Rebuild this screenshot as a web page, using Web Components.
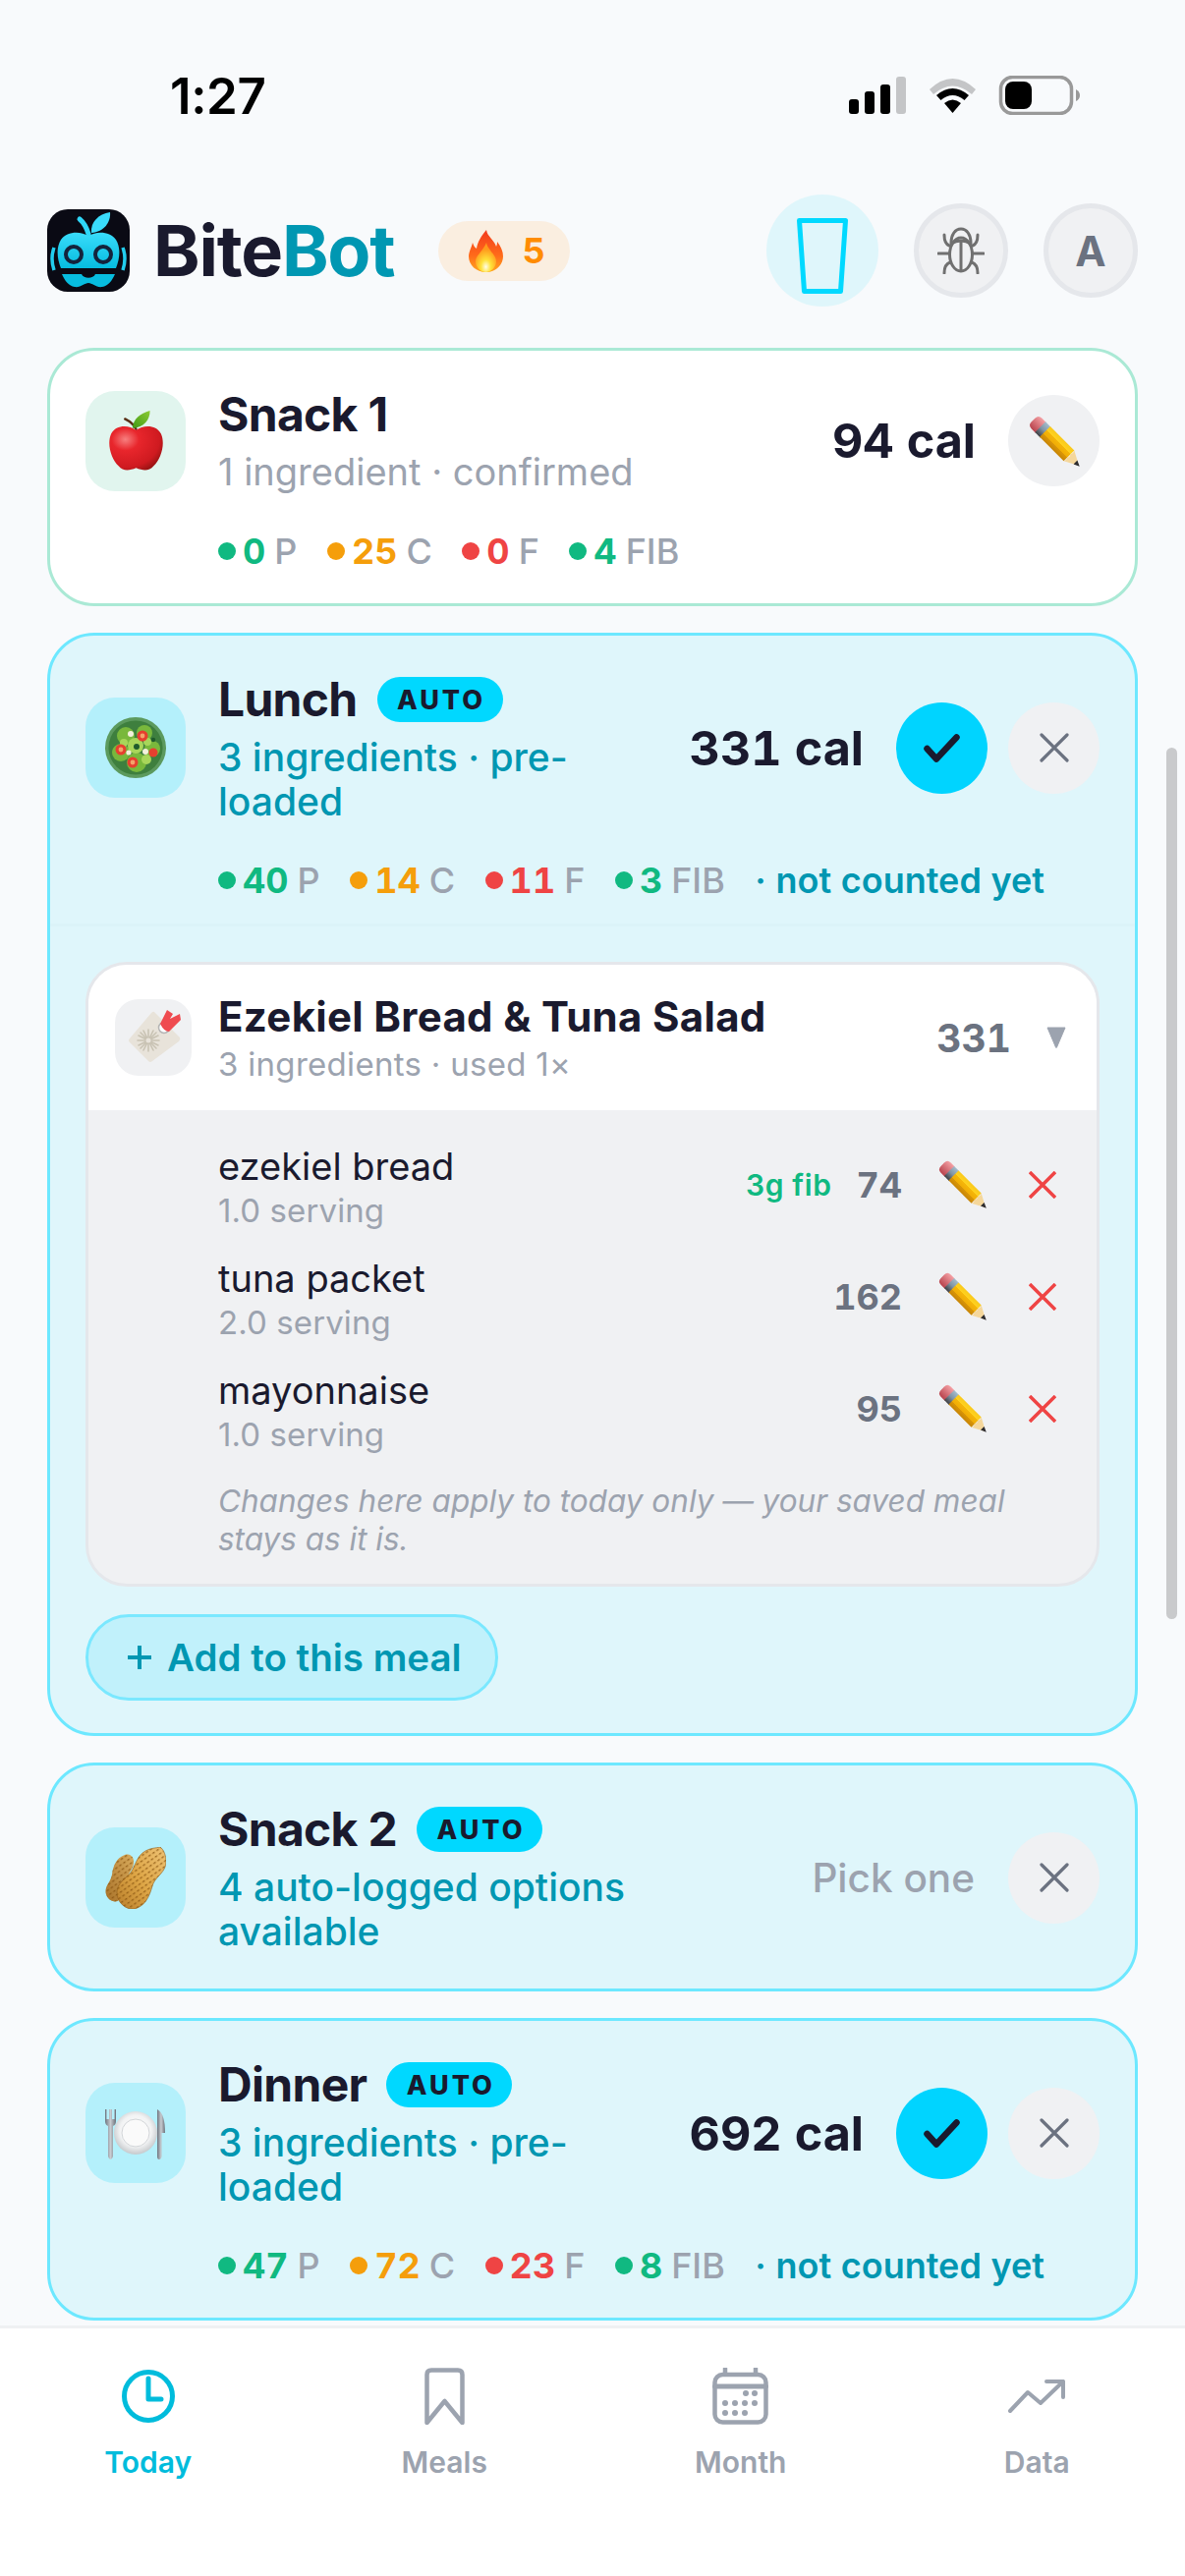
<!DOCTYPE html>
<html lang="en"><head><meta charset="utf-8"><title>BiteBot</title>
<style>
html,body{margin:0;padding:0;background:#f8fafc}
body{font-family:Inter,"Liberation Sans",sans-serif;color:#1a1a2e}
</style></head><body>
<bite-app>
  <status-bar slot="status"></status-bar>
  <app-header slot="header"></app-header>

  <meal-card tone="done">
    <food-icon slot="icon" name="apple" tone="done"></food-icon>
    <span slot="title">Snack 1</span>
    <span slot="sub">1 ingredient · confirmed</span>
    <cal-label slot="right">94 cal</cal-label>
    <round-btn slot="right" kind="edit"></round-btn>
    <macro-row slot="macros" p="0" c="25" f="0" fib="4"></macro-row>
  </meal-card>

  <meal-card tone="auto">
    <food-icon slot="icon" name="salad" tone="auto"></food-icon>
    <span slot="title">Lunch</span>
    <auto-badge slot="title-extra">AUTO</auto-badge>
    <span slot="sub">3 ingredients · pre-loaded</span>
    <cal-label slot="right">331 cal</cal-label>
    <round-btn slot="right" kind="check"></round-btn>
    <round-btn slot="right" kind="close"></round-btn>
    <macro-row slot="macros" p="40" c="14" f="11" fib="3" pending="· not counted yet"></macro-row>
    <card-rule></card-rule>
    <saved-meal title="Ezekiel Bread &amp; Tuna Salad" meta="3 ingredients · used 1×" cal="331">
      <ingredient-row name="ezekiel bread" serving="1.0 serving" cal="74" fib="3g fib"></ingredient-row>
      <ingredient-row name="tuna packet" serving="2.0 serving" cal="162"></ingredient-row>
      <ingredient-row name="mayonnaise" serving="1.0 serving" cal="95"></ingredient-row>
      <span slot="note">Changes here apply to today only — your saved meal stays as it is.</span>
    </saved-meal>
    <add-button>Add to this meal</add-button>
  </meal-card>

  <meal-card tone="auto" nomacros>
    <food-icon slot="icon" name="peanut" tone="auto"></food-icon>
    <span slot="title">Snack 2</span>
    <auto-badge slot="title-extra">AUTO</auto-badge>
    <span slot="sub">4 auto-logged options available</span>
    <pick-label slot="right">Pick one</pick-label>
    <round-btn slot="right" kind="close"></round-btn>
  </meal-card>

  <meal-card tone="auto">
    <food-icon slot="icon" name="plate" tone="auto"></food-icon>
    <span slot="title">Dinner</span>
    <auto-badge slot="title-extra">AUTO</auto-badge>
    <span slot="sub">3 ingredients · pre-loaded</span>
    <cal-label slot="right">692 cal</cal-label>
    <round-btn slot="right" kind="check"></round-btn>
    <round-btn slot="right" kind="close"></round-btn>
    <macro-row slot="macros" p="47" c="72" f="23" fib="8" pending="· not counted yet"></macro-row>
  </meal-card>

  <tab-bar slot="tabs"></tab-bar>
</bite-app>

<script>
const ART={
 pencil:`<svg viewBox="0 0 64 64" width="100%" height="100%"><defs>
   <linearGradient id="pb" x1="0" y1="0" x2="0" y2="1"><stop offset="0" stop-color="#f9c91c"/><stop offset=".33" stop-color="#ffd21f"/><stop offset=".34" stop-color="#f5b60a"/><stop offset=".66" stop-color="#f0ac05"/><stop offset=".67" stop-color="#d99608"/><stop offset="1" stop-color="#c78505"/></linearGradient>
   <linearGradient id="pf" x1="0" y1="0" x2="0" y2="1"><stop offset="0" stop-color="#a5bccb"/><stop offset=".5" stop-color="#8094a5"/><stop offset="1" stop-color="#3f3f42"/></linearGradient>
   <linearGradient id="pe" x1="0" y1="0" x2="0" y2="1"><stop offset="0" stop-color="#f4a0a4"/><stop offset="1" stop-color="#b9434d"/></linearGradient>
   </defs><g transform="translate(8,8) rotate(45)">
   <path d="M11 -9H4Q-2 -9 -2 -3V3Q-2 9 4 9H11Z" fill="url(#pe)"/>
   <rect x="10" y="-9" width="9" height="18" fill="url(#pf)"/>
   <rect x="18" y="-9" width="41" height="18" fill="url(#pb)"/>
   <path d="M59 -9L76 0L59 9Q61 6 59 3Q61 0 59 -3Q61 -6 59 -9Z" fill="#f5d79b"/>
   <path d="M70 -3.2L77 0L70 3.2Z" fill="#2c2c30"/></g></svg>`,
 apple:`<svg viewBox="0 0 60 66" width="57" height="62"><defs>
   <radialGradient id="a" cx=".3" cy=".3" r=".85"><stop offset="0" stop-color="#f77f7f"/><stop offset=".3" stop-color="#e8262c"/><stop offset=".75" stop-color="#cf1a20"/><stop offset="1" stop-color="#87110f"/></radialGradient>
   <linearGradient id="l" x1="0" y1="1" x2="1" y2="0"><stop offset="0" stop-color="#3f9a15"/><stop offset="1" stop-color="#8ccb35"/></linearGradient></defs>
   <path d="M30 20C27 14 22 11 18 9" stroke="#5a2f16" stroke-width="2.6" fill="none" stroke-linecap="round"/>
   <path d="M26 19C27 9 34 3 45 0C45 10 39 18 26 19Z" fill="url(#l)"/>
   <path d="M30 21C22 15 8 15 3 25C-2 36 3 52 11 60C16 66 23 65 30 62C37 65 44 66 49 60C57 52 62 36 57 25C52 15 38 15 30 21Z" fill="url(#a)"/></svg>`,
 salad:`<svg viewBox="0 0 64 64" width="64" height="64"><circle cx="32" cy="32" r="31" fill="#5c9a5e"/><circle cx="32" cy="32" r="27.500" fill="#3e7f3e"/>
   <g fill="#79b83c"><circle cx="22" cy="20" r="9"/><circle cx="41" cy="17" r="8"/><circle cx="49" cy="33" r="8"/><circle cx="17" cy="37" r="9"/><circle cx="33" cy="47" r="10"/></g>
   <g fill="#a8d65a"><circle cx="32" cy="30" r="8"/><circle cx="20" cy="27" r="4"/><circle cx="44" cy="26" r="4"/><circle cx="43" cy="44" r="5"/></g>
   <g fill="#e6402f"><circle cx="17" cy="34" r="5.500"/><circle cx="39" cy="20" r="5.500"/><circle cx="29" cy="47" r="5.500"/><circle cx="50" cy="37" r="4.500"/></g>
   <g fill="#f5a36a"><circle cx="17" cy="34" r="2.400"/><circle cx="39" cy="20" r="2.400"/><circle cx="29" cy="47" r="2.400"/></g>
   <g fill="#f4f1dc"><circle cx="27" cy="18" r="3"/><circle cx="42" cy="36" r="3"/><circle cx="25" cy="37" r="2.600"/></g>
   <g fill="#1f5c2c"><circle cx="33" cy="31" r="3"/><circle cx="50" cy="24" r="2.200"/></g></svg>`,
 peanut:`<svg viewBox="0 0 62 63" width="62" height="63"><defs>
   <linearGradient id="n" x1="1" y1="0" x2="0" y2="1"><stop offset="0" stop-color="#eec274"/><stop offset=".55" stop-color="#dda545"/><stop offset="1" stop-color="#b97f2c"/></linearGradient>
   <linearGradient id="n2" x1="1" y1="0" x2="0" y2="1"><stop offset="0" stop-color="#d9ab5c"/><stop offset="1" stop-color="#a9732a"/></linearGradient>
   <pattern id="d" width="5" height="4.500" patternUnits="userSpaceOnUse" patternTransform="rotate(-35)"><rect x=".5" y="1" width="3" height="1.300" rx=".6" fill="#87530f" opacity=".75"/></pattern></defs>
   <path d="M20 8C26 6 30 11 29 17C28 23 24 26 22 32C20 40 20 47 13 55C7 57 1 52 0.500 46C0 39 6 35 7 28C8 20 11 11 20 8Z" fill="url(#n2)"/>
   <path d="M20 8C26 6 30 11 29 17C28 23 24 26 22 32C20 40 20 47 13 55C7 57 1 52 0.500 46C0 39 6 35 7 28C8 20 11 11 20 8Z" fill="url(#d)"/>
   <path d="M56 0C60 3 62 9 62 15C62 25 53 29 49 37C46 45 44 59 30 63C20 64 12 56 12 46C12 37 20 33 26 26C31 19 32 9 41 4C46 1 52 1 56 0Z" fill="url(#n)" stroke="#8f5a17" stroke-width=".6"/>
   <path d="M56 0C60 3 62 9 62 15C62 25 53 29 49 37C46 45 44 59 30 63C20 64 12 56 12 46C12 37 20 33 26 26C31 19 32 9 41 4C46 1 52 1 56 0Z" fill="url(#d)"/></svg>`,
 plate:`<svg viewBox="0 0 64 64" width="64" height="64"><defs><radialGradient id="p" cx=".5" cy=".45" r=".6"><stop offset="0" stop-color="#fff"/><stop offset=".6" stop-color="#f2f3f4"/><stop offset="1" stop-color="#b9bdc1"/></radialGradient>
   <linearGradient id="m" x1="0" y1="0" x2="1" y2="0"><stop offset="0" stop-color="#6f7680"/><stop offset=".5" stop-color="#c8ccd1"/><stop offset="1" stop-color="#6b7079"/></linearGradient></defs>
   <circle cx="32" cy="32" r="22" fill="url(#p)"/><circle cx="32" cy="32" r="14" fill="#fafafa" stroke="#d3d6d9" stroke-width="1"/>
   <path d="M1 8V20Q1 24 4 25V56Q5 59 6.500 59Q8 59 9 56V25Q12 24 12 20V8H10.500V18H8V8H5V18H2.500V8Z" fill="url(#m)"/>
   <path d="M54 8C60 11 62 20 62 32H58.500V56Q58 59 56 59Q54 59 54 56Z" fill="url(#m)"/></svg>`,
 tag:`<svg viewBox="0 0 78 78" width="78" height="78"><path d="M40 13L66 39Q67 41 65 43L38 63Q36 65 34 63L15 44Q13 42 15 40L37 14Q39 12 40 13Z" fill="#e8e3da"/>
   <g stroke="#c9c3b4" stroke-width="1.600" stroke-linecap="round"><path d="M34 31V53M23 42H45M26 34L42 50M42 34L26 50M29 32L39 52M39 32L29 52M24 37L44 47M44 37L24 47"/></g><circle cx="34" cy="42" r="2.500" fill="#e8e3da"/>
   <circle cx="50" cy="29" r="5.500" fill="#fff" stroke="#b5b5b5" stroke-width="1.500"/>
   <path d="M46 25L53 11L59 15L56 20L66 15L67 21L55 33Q50 33 46 25Z" fill="#ef4b50"/></svg>`
};
class Base extends HTMLElement{
  connectedCallback(){
    if(this.shadowRoot)return;
    const r=this.attachShadow({mode:'open'});
    r.innerHTML=`<style>${this.css()}</style>${this.html()}`;
  }
  a(n,d=''){return this.getAttribute(n)??d}
}
const def=(tag,css,html)=>customElements.define(tag,class extends Base{css(){return css}html(){return html?html(this):'<slot></slot>'}});

def('bite-app',`
 :host{display:block;position:relative;width:1206px;height:2622px;overflow:hidden;background:#f8fafc;font-family:Inter,"Liberation Sans",sans-serif}
 .shell{display:flex;flex-direction:column;height:100%}
 main{flex:1;min-height:0;overflow:hidden;display:flex;flex-direction:column;gap:27px;padding:0 48px;box-sizing:border-box}
 .bar{position:absolute;left:1187px;top:761px;width:11px;height:887px;border-radius:6px;background:#c9cacc}
`,()=>`<div class="shell"><slot name="status"></slot><slot name="header"></slot><main><slot></slot></main><slot name="tabs"></slot></div><div class="bar"></div>`);

def('status-bar',`
 :host{display:flex;align-items:center;height:194px;padding:0 106px 0 173px;box-sizing:border-box}
 .t{font-size:51px;font-weight:600;color:#000;flex:1;line-height:1;letter-spacing:-.4px}
 svg{display:block}
`,()=>`<span class="t">1:27</span>
 <svg width="236" height="40" viewBox="0 0 236 40">
  <g><rect x="0" y="24" width="10" height="15" rx="3"/><rect x="16" y="16" width="10" height="23" rx="3"/><rect x="32" y="9" width="10" height="30" rx="3"/><rect x="48" y="1" width="10" height="38" rx="3" fill="#c4c5c7"/></g>
  <g transform="translate(80,0)"><path d="M2 14Q25.500 -8 49 14L45 19Q25.500 2 6 19Z" fill="#c4c5c7"/><path d="M9 20Q25.500 6 42 20L37.500 25Q25.500 15 13.500 25Z"/><path d="M17 28Q25.500 21 34 28L25.500 38Z"/></g>
  <rect x="154.500" y="1.500" width="72" height="37" rx="12" fill="none" stroke="#999" stroke-width="3.500"/>
  <rect x="159" y="6" width="27" height="28" rx="8"/>
  <path d="M231 14Q235 16 235 20Q235 24 231 26Z" fill="#999"/>
 </svg>`);

def('app-header',`
 :host{display:flex;align-items:center;height:114px;margin:4px 0 42px;padding:0 48px;box-sizing:border-box}
 .logo{width:84px;height:84px;flex:none;display:block}
 .word{margin-left:24px;font-size:72px;font-weight:700;letter-spacing:-1.2px;color:#1a1a2e;line-height:1}
 .word b{font-weight:700;color:#0097b2}
 .streak{margin-left:45px;display:flex;align-items:center;height:61px;width:134px;box-sizing:border-box;padding-left:31px;gap:19px;border-radius:31px;background:#faeee0;color:#ff8c00;font-size:36px;font-weight:700}
 .sp{flex:1}
 .water{width:114px;height:114px;border-radius:50%;background:#dff6fb;display:flex;align-items:center;justify-content:center;margin-right:36px;box-sizing:border-box;padding-top:10px}
 .ic{width:96px;height:96px;box-sizing:border-box;border-radius:50%;background:#f0f1f3;border:5px solid #e5e7eb;display:flex;align-items:center;justify-content:center;color:#6b7280;font-size:42px;font-weight:700}
 .ic+.ic{margin-left:36px}
`,()=>`
 <svg class="logo" viewBox="0 0 84 84"><defs><linearGradient id="g" x1="0" y1="0" x2="0" y2="1"><stop offset="0" stop-color="#39dcfb"/><stop offset="1" stop-color="#06bcdf"/></linearGradient></defs>
  <rect width="84" height="84" rx="21" fill="#0a0a14"/>
  <path d="M33 10Q39 15 42 25" stroke="#2ed6f7" stroke-width="5" fill="none" stroke-linecap="round"/>
  <path d="M45 24C44 13 52 5 64 3C65 13 58 23 45 24Z" fill="#3adcfb"/>
  <path d="M42 27C34 22 20 22 14 31C9 39 10 50 14 60H70C74 50 75 39 70 31C64 22 50 22 42 27Z" fill="url(#g)"/>
  <g fill="none" stroke="#14233c" stroke-width="4"><circle cx="27" cy="46" r="8"/><circle cx="57" cy="46" r="8"/></g>
  <path d="M15 66H35C37 71 47 71 49 66H69C66 73 62 78 56 79C50 80 46 75 42 75C38 75 34 80 28 79C22 78 18 73 15 66Z" fill="#07bcdf"/>
  <path d="M7 39Q3 50 7 62M77 39Q81 50 77 62" stroke="#22cdee" stroke-width="3.500" fill="none"/>
 </svg>
 <span class="word">Bite<b>Bot</b></span>
 <span class="streak"><svg width="35" height="43" viewBox="0 0 35 43"><defs><linearGradient id="f" x1="0" y1="0" x2="0" y2="1"><stop offset="0" stop-color="#f23a1c"/><stop offset=".6" stop-color="#ff6a1a"/><stop offset="1" stop-color="#ffa81f"/></linearGradient><radialGradient id="w" cx=".5" cy=".82" r=".6"><stop offset="0" stop-color="#fffde8"/><stop offset=".4" stop-color="#ffe23a"/><stop offset="1" stop-color="#ff9a1c"/></radialGradient></defs>
   <path d="M18 0C19 7 26 10 28 17C29 15 29 13 29 12C33 17 35 22 35 27C35 36 27 43 17.500 43C8 43 0 36 0 27C0 22 3 18 4 13C5 16 6 18 8 19C9 12 13 6 18 0Z" fill="url(#f)"/>
   <path d="M18 13C19 20 28 25 28 32C28 38 23 43 17.500 43C12 43 7 38 7 32C7 26 15 21 18 13Z" fill="url(#w)"/></svg>5</span>
 <span class="sp"></span>
 <span class="water"><svg width="52" height="77" viewBox="0 0 52 77"><path d="M2.500 2.500H49.500L44.500 74.500H7.500Z" fill="none" stroke="#00d9ff" stroke-width="5" stroke-linejoin="round"/></svg></span>
 <span class="ic"><svg width="48" height="48" viewBox="0 0 48 48" fill="none" stroke="#707070" stroke-width="3" stroke-linecap="round" stroke-linejoin="round">
   <ellipse cx="24" cy="28" rx="11.500" ry="17"/><path d="M24 15V44M14 16C14 8 18 2 24 2C30 2 34 8 34 16M14 17Q24 11 34 17"/>
   <path d="M12 19Q7 17 7 8M36 19Q41 17 41 8M12 27H1M36 27H47M13 36Q7 38 7 47M35 36Q41 38 41 47"/></svg></span>
 <span class="ic">A</span>`);

def('meal-card',`
 :host{display:block;flex:none;box-sizing:border-box;border-radius:48px;border:3px solid #6de8ff;background:#dff6fb;padding:36px 36px 33px}
 :host([tone=done]){background:#fff;border-color:#aae9d5}
 :host([nomacros]){padding-bottom:35px}
 .top{display:flex;align-items:center}
 .icon{flex:none;margin-right:33px;display:flex}
 .text{flex:1;min-width:0}
 .tl{display:flex;align-items:center;gap:20px;font-size:48px;font-weight:700;line-height:58px;color:#1a1a2e;letter-spacing:-.7px}
 .sub{margin:7px 0 1px;font-size:39px;line-height:45px;font-weight:500;color:#0097b2}
 :host([tone=done]) .sub{font-weight:400;font-size:38px;color:#9ca3af}
 .right{flex:none;display:flex;align-items:center;margin-left:36px;gap:21px}
 .macros{margin:40px 0 3px 135px}
 :host([nomacros]) .macros{display:none}
`,()=>`<div class="top"><div class="icon"><slot name="icon"></slot></div>
 <div class="text"><div class="tl"><slot name="title"></slot><slot name="title-extra"></slot></div><div class="sub"><slot name="sub"></slot></div></div>
 <div class="right"><slot name="right"></slot></div></div>
 <div class="macros"><slot name="macros"></slot></div><slot></slot>`);

def('card-rule',`:host{display:block;height:3px;margin:27px -36px 0;background:#dbf3f8}`,()=>``);

def('food-icon',`
 :host{display:flex;align-items:center;justify-content:center;width:102px;height:102px;border-radius:30px;background:#b4f0fb}
 :host([tone=done]){background:#e1f5ee}
 svg{display:block}
`,t=>ART[t.a('name')]);

def('auto-badge',`
 :host{display:flex;align-items:center;justify-content:center;width:128px;height:46px;border-radius:23px;background:#00d8ff;color:#1a1a2e;font-size:27px;line-height:1;font-weight:800;letter-spacing:3px;text-indent:3px}
`);
def('cal-label',`:host{display:block;font-size:48.500px;font-weight:700;color:#1a1a2e;margin-right:12px;white-space:nowrap;font-variant-numeric:tabular-nums}`);
def('pick-label',`:host{display:block;font-size:40.500px;font-weight:500;color:#9ca3af;margin-right:13px;white-space:nowrap}`);

customElements.define('round-btn',class extends Base{
 css(){return `:host{display:flex;flex:none;align-items:center;justify-content:center;width:93px;height:93px;border-radius:50%;background:#f0f1f3}
 :host([kind=check]){background:#00d4ff}
 .p{display:block;width:54px;height:54px}svg{display:block}`}
 html(){const k=this.a('kind');
  if(k==='edit')return `<span class="p">${ART.pencil}</span>`;
  if(k==='check')return `<svg width="37" height="29" viewBox="0 0 37 29" fill="none" stroke="#1a1a2e" stroke-width="6.500" stroke-linecap="round" stroke-linejoin="round"><path d="M3.500 15L13 25.500L33.500 3.500"/></svg>`;
  return `<svg width="30" height="30" viewBox="0 0 30 30" stroke="#6b7280" stroke-width="3.200" stroke-linecap="round"><path d="M2 2L28 28M28 2L2 28"/></svg>`;}
});

customElements.define('macro-row',class extends Base{
 css(){return `:host{display:flex;align-items:center;height:34px;gap:30.500px;font-size:36px;line-height:34px;white-space:nowrap;font-variant-numeric:tabular-nums}
 .m{display:flex;align-items:center}
 i{width:18px;height:18px;border-radius:50%;margin-right:7px;flex:none}
 b{font-weight:700}
 span{font-weight:500;color:#9ca3af;margin-left:9px}
 .pend{font-weight:600;color:#0097b2;margin-left:0}`}
 html(){const it=(v,l,c)=>`<div class="m"><i style="background:${c}"></i><b style="color:${c}">${v}</b><span>${l}</span></div>`;
  const p=this.a('pending');
  return it(this.a('p'),'P','#10b981')+it(this.a('c'),'C','#f59e0b')+it(this.a('f'),'F','#ef4444')+it(this.a('fib'),'FIB','#10b981')+(p?`<span class="pend">${p}</span>`:'');}
});

customElements.define('saved-meal',class extends Base{
 css(){return `:host{display:block;margin-top:36px;border:3px solid #e5e7eb;border-radius:42px;overflow:hidden;background:#f0f1f3}
 .hd{display:flex;align-items:center;height:148px;background:#fff;padding:0 31px 0 27px;box-sizing:border-box}
 .ico{width:78px;height:78px;border-radius:24px;background:#f0f1f3;flex:none;margin-right:27px;display:flex}
 .tx{flex:1;min-width:0}
 .t{font-size:42px;font-weight:700;line-height:50px;color:#1a1a2e;letter-spacing:.3px}
 .m{font-size:33px;line-height:40px;margin-top:3px;color:#9ca3af;letter-spacing:.3px}
 .c{font-size:39px;font-weight:700;color:#6b7280;margin-right:36px;font-variant-numeric:tabular-nums}
 .bd{padding:34px 0 26px 132px}
 .rows{display:flex;flex-direction:column;gap:26px}
 .note{margin-top:28px;padding-right:40px;font-size:31.500px;line-height:39px;font-style:italic;color:#9ca3af}
 svg{display:block}`}
 html(){return `<div class="hd"><span class="ico">${ART.tag}</span><div class="tx"><div class="t">${this.a('title').replace('&','&amp;')}</div><div class="m">${this.a('meta')}</div></div>
  <span class="c">${this.a('cal')}</span><svg width="20" height="22" viewBox="0 0 20 22"><path d="M1 1H19L10.500 21Q10 22 9.500 21Z" fill="#9ca3af" stroke="#9ca3af" stroke-width="1" stroke-linejoin="round"/></svg></div>
  <div class="bd"><div class="rows"><slot></slot></div><div class="note"><slot name="note"></slot></div></div>`}
});

customElements.define('ingredient-row',class extends Base{
 css(){return `:host{display:flex;align-items:center;height:88px}
 .tx{flex:1;min-width:0}
 .n{font-size:38px;line-height:47px;color:#1a1a2e;margin-bottom:2px}
 .s{font-size:33px;line-height:39px;color:#9ca3af;letter-spacing:.1px}
 .r{display:flex;align-items:center;margin-bottom:5px;padding-right:41px}
 .f{font-size:30px;font-weight:600;color:#10b981;margin-right:25px;letter-spacing:.6px}
 .c{font-size:36px;font-weight:700;color:#6b7280;margin-right:36px;font-variant-numeric:tabular-nums}
 .p{width:51px;height:51px;margin-right:42px}
 svg{display:block}`}
 html(){const f=this.a('fib');return `<div class="tx"><div class="n">${this.a('name')}</div><div class="s">${this.a('serving')}</div></div>
  <div class="r">${f?`<span class="f">${f}</span>`:''}<span class="c">${this.a('cal')}</span><span class="p">${ART.pencil}</span>
  <svg width="28" height="28" viewBox="0 0 28 28" stroke="#ef4444" stroke-width="3.500"><path d="M1 1L27 27M27 1L1 27"/></svg></div>`}
});

def('add-button',`
 :host{display:flex;align-items:center;width:420px;height:88px;box-sizing:border-box;margin-top:28px;border:3px solid #7ae8ff;border-radius:44px;background:#c1f1fb;color:#0097b2;font-size:38.500px;font-weight:600;padding-left:40px;gap:16px;white-space:nowrap}
 svg{display:block;flex:none}
`,()=>`<svg width="24" height="24" viewBox="0 0 24 24" stroke="#0097b2" stroke-width="4"><path d="M12 0V24M0 12H24"/></svg><slot></slot>`);

def('tab-bar',`
 :host{display:grid;grid-template-columns:repeat(4,1fr);flex:none;height:255px;box-sizing:border-box;background:#fff;border-top:3px solid #eff1f3;padding-top:39px}
 .t{display:flex;flex-direction:column;align-items:center;color:#9ca3af;font-size:30px;font-weight:600;line-height:40px}
 .t.on{color:#00bcdc}
 .i{height:60px;margin-bottom:17px;display:flex;align-items:center;justify-content:center}
 svg{display:block}
`,()=>`
 <div class="t on"><div class="i"><svg width="54" height="54" viewBox="0 0 54 54" fill="none" stroke="#00bcdc" stroke-width="5" stroke-linecap="round" stroke-linejoin="round"><circle cx="27" cy="27" r="24.500"/><path d="M27 9V30H40"/></svg></div>Today</div>
 <div class="t"><div class="i"><svg width="41" height="58" viewBox="0 0 41 58" fill="none" stroke="#9ca3af" stroke-width="4.500" stroke-linejoin="round"><path d="M2.500 56V7Q2.500 2.500 7 2.500H34Q38.500 2.500 38.500 7V56L20.500 34Z"/></svg></div>Meals</div>
 <div class="t"><div class="i"><svg width="57" height="58" viewBox="0 0 57 58" fill="none" stroke="#9ca3af" stroke-width="4.500" stroke-linecap="round"><rect x="2.500" y="7" width="52" height="48.500" rx="8"/><path d="M2.500 19H54.500" stroke-width="5"/><path d="M13 1V6M44 1V6"/><g fill="#9ca3af" stroke="none"><circle cx="34" cy="26" r="3"/><circle cx="43" cy="26" r="3"/><circle cx="13" cy="36" r="3"/><circle cx="23" cy="36" r="3"/><circle cx="33" cy="36" r="3"/><circle cx="43" cy="36" r="3"/><circle cx="13" cy="46" r="3"/><circle cx="23" cy="46" r="3"/><circle cx="33" cy="46" r="3"/></g></svg></div>Month</div>
 <div class="t"><div class="i"><svg width="58" height="34" viewBox="0 0 58 34" fill="none" stroke="#9ca3af" stroke-width="4" stroke-linecap="round" stroke-linejoin="round"><path d="M2 32L20 13L33 24L56 2M39 2H56V18"/></svg></div>Data</div>`);
</script>
</body></html>
